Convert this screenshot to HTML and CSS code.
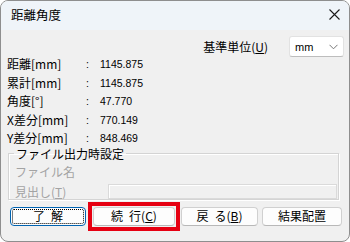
FILE: index.html
```html
<!DOCTYPE html>
<html lang="ja">
<head>
<meta charset="utf-8">
<link rel="stylesheet" href="styles.css">
</head>
<body>
<div class="window">
  <div class="titlebar">
    <span class="title">距離角度</span>
    <svg class="close" width="11" height="11" viewBox="0 0 11 11"><path d="M0.5 0.5 L10.5 10.5 M10.5 0.5 L0.5 10.5" stroke="#1a1a1a" stroke-width="1.1" fill="none"/></svg>
  </div>
  <div class="content">
    <div class="unit-row">
      <span class="unit-label">基準単位(<u>U</u>)</span>
      <div class="select">
        <span>mm</span>
        <svg width="9" height="6" viewBox="0 0 9 6"><path d="M0.5 0.8 L4.5 4.8 L8.5 0.8" stroke="#777" stroke-width="1" fill="none"/></svg>
      </div>
    </div>
    <div class="rows">
      <span class="lbl">距離[mm]</span><span class="colon">:</span><span class="val">1145.875</span>
      <span class="lbl">累計[mm]</span><span class="colon">:</span><span class="val">1145.875</span>
      <span class="lbl">角度[°]</span><span class="colon">:</span><span class="val">47.770</span>
      <span class="lbl">X差分[mm]</span><span class="colon">:</span><span class="val">770.149</span>
      <span class="lbl">Y差分[mm]</span><span class="colon">:</span><span class="val">848.469</span>
    </div>
    <fieldset class="group">
      <legend>ファイル出力時設定</legend>
      <div class="grow">ファイル名</div>
      <div class="grow">
        <span class="glbl">見出し(<u>T</u>)</span>
        <div class="textbox"></div>
      </div>
    </fieldset>
    <div class="buttons">
      <button class="btn ok"><span class="focus">了&ensp;解</span></button>
      <div class="highlight"><button class="btn cont">続&ensp;行(<u>C</u>)</button></div>
      <button class="btn back">戻&ensp;る(<u>B</u>)</button>
      <button class="btn place">結果配置</button>
    </div>
  </div>
</div>
</body>
</html>
```

FILE: styles.css
```css
* { box-sizing: border-box; }
html, body { margin: 0; padding: 0; background: #ffffff; }
body {
  width: 350px;
  height: 242px;
  font-family: "Noto Sans CJK JP", "Noto Sans", sans-serif;
  font-size: 12px;
  color: #000;
}
.window {
  width: 350px;
  height: 242px;
  border: 1px solid #8e8e8e;
  border-radius: 8px;
  background: #f0f0f0;
  overflow: hidden;
  display: flex;
  flex-direction: column;
}
.titlebar {
  height: 29px;
  flex: none;
  background: #eff4f9;
  display: flex;
  align-items: center;
  justify-content: space-between;
  padding: 0 9px 0 10px;
}
.title {
  font-size: 12.5px;
  line-height: 1;
  margin-top: -1px;
}
.close { margin-top: -2px; }
.content {
  flex: 1;
  display: flex;
  flex-direction: column;
}
.unit-row {
  display: flex;
  justify-content: flex-end;
  align-items: center;
  margin-top: 6px;
  height: 21px;
  padding-right: 5px;
  gap: 21px;
}
.unit-label { line-height: 1; }
.select {
  width: 55px;
  height: 21px;
  background: #fff;
  border: 1px solid #e2e2e2;
  border-bottom-color: #bdbdbd;
  border-radius: 3px;
  display: flex;
  align-items: center;
  justify-content: space-between;
  padding: 0 5px 0 5px;
  font-family: "Liberation Sans", sans-serif;
  font-size: 11px;
}
.rows {
  margin-top: -2px;
  padding-left: 6px;
  display: grid;
  grid-template-columns: 79px 14px auto;
  grid-auto-rows: 18.5px;
  align-items: center;
}
.lbl { line-height: 1; }
.colon, .val {
  font-family: "Liberation Sans", sans-serif;
  font-size: 10.5px;
  line-height: 1;
}
.group {
  margin: 0 10px 0 7px;
  padding: 2px 0 0 6px;
  height: 52px;
  border: 1px solid #d4d4d4;
  box-shadow: 1px 1px 0 #ffffff, inset 1px 1px 0 #ffffff;
  min-width: 0;
}
.group legend {
  padding: 0 2px;
  margin-left: -1px;
  line-height: 1;
  font-size: 12px;
}
.grow {
  height: 20px;
  display: flex;
  align-items: center;
  color: #a3a3a3;
  line-height: 1;
}
.glbl { width: 93px; flex: none; }
.textbox {
  flex: 1;
  height: 15px;
  margin-right: 1px;
  border: 1px solid #dadada;
  box-shadow: inset 1px 1px 0 #fff;
  background: #f0f0f0;
}
.buttons {
  display: flex;
  align-items: center;
  padding-left: 9px;
  margin-top: 2px;
}
.btn {
  font-family: "Noto Sans CJK JP", sans-serif;
  font-size: 12px;
  line-height: 1;
  height: 19px;
  background: #fdfdfd;
  border: 1px solid #d0d0d0;
  border-bottom-color: #b8b8b8;
  border-radius: 4px;
  padding: 0;
  color: #000;
  display: flex;
  align-items: center;
  justify-content: center;
}
.ok {
  width: 76px;
  border: 1px solid #0063b1;
  padding: 1px;
}
.ok .focus {
  flex: 1;
  align-self: stretch;
  display: flex;
  align-items: center;
  justify-content: center;
  border: 1px dotted #000;
  border-radius: 2px;
}
.highlight {
  margin-left: 2px;
  width: 92px;
  height: 29px;
  border: 4px solid #e60012;
  display: flex;
  align-items: center;
  justify-content: center;
}
.cont { width: 82px; }
.back { width: 77px; margin-left: 1px; }
.place { width: 80px; margin-left: 4px; }
u { text-decoration: underline; text-underline-offset: 1px; }
```
